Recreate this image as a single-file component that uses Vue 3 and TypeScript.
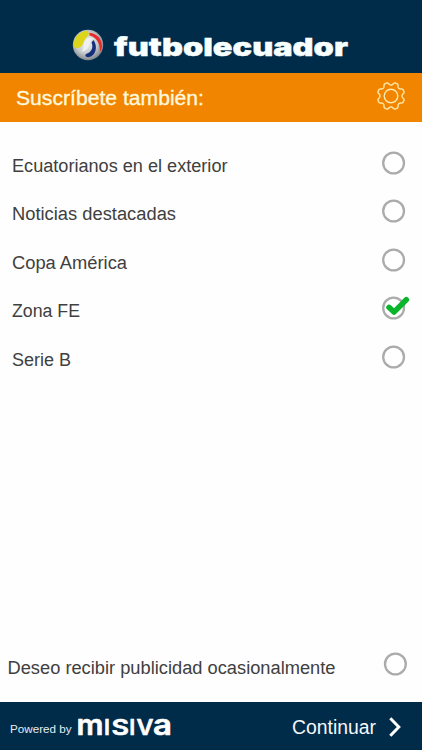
<script setup lang="ts">
import { ref } from 'vue'

interface Topic {
  label: string
  width: number
  selected: boolean
}

const topics = ref<Topic[]>([
  { label: 'Ecuatorianos en el exterior', width: 215.5, selected: false },
  { label: 'Noticias destacadas', width: 164, selected: false },
  { label: 'Copa América', width: 115, selected: false },
  { label: 'Zona FE', width: 68, selected: true },
  { label: 'Serie B', width: 59, selected: false },
])
const advertising = ref(false)

// Eight flat-topped teeth, with a gap between teeth at twelve o'clock.
function gearPath(cx: number, cy: number): string {
  const points: string[] = []
  for (let i = 0; i < 160; i++) {
    const a = (i / 160) * Math.PI * 2
    const wave = Math.tanh(1.5 * (0.15 - Math.cos(8 * a)))
    const r = 12.3 + 1.5 * wave
    points.push(`${(cx + r * Math.sin(a)).toFixed(2)} ${(cy - r * Math.cos(a)).toFixed(2)}`)
  }
  return `M${points.join('L')}Z`
}
const gear = gearPath(15, 15)
</script>

<template>
  <main class="screen">
    <header class="brand">
      <svg class="ball" width="32" height="32" viewBox="0 0 32 32" aria-hidden="true">
        <defs>
          <radialGradient id="sphere" cx="0.45" cy="0.42" r="0.6">
            <stop offset="0" stop-color="#f4f5f6" />
            <stop offset="0.6" stop-color="#c5c9cc" />
            <stop offset="1" stop-color="#7b8188" />
          </radialGradient>
        </defs>
        <circle cx="16" cy="16" r="15.2" fill="url(#sphere)" />
        <path d="M1.600 17.500C1.500 9 6.500 3 14.500 1.800c3 .8 3 4 .5 6.200-3.500 3-3 8-6.800 10.300-2.400 1.300-5 .7-6.600-.8z" fill="#ddd51c" />
        <path d="M17.500 3.800C25 4.500 30 10 30 17.500c-.3 2.300-1 4-2 5.500C28 14 24.500 8 17.500 6.500z" fill="#e62a2c" />
        <path d="M21.500 11c4.500 6.500 2.500 15-4 17-3.500.8-5.500-1.600-3-3.200C20 23 21.500 18 19.500 13.500z" fill="#14307d" />
        <path d="M12.500 14c1.500-5.500 6-7.500 10-3.500-3-1-4.500.5-5 4-.8 5-4 8-8 8 2.500-2.500 2-5.500 3-8.500z" fill="#eef0f2" />
      </svg>
      <svg class="brand-name" width="238" height="30" viewBox="0 0 238 30">
        <text x="2" y="22.500" textLength="234" lengthAdjust="spacingAndGlyphs">futbolecuador</text>
      </svg>
    </header>

    <div class="title-bar">
      <svg class="title" width="200" height="30" viewBox="0 0 200 30">
        <text x="0" y="21" textLength="188" lengthAdjust="spacingAndGlyphs">Suscríbete también:</text>
      </svg>
      <svg class="gear" width="30" height="30" viewBox="0 0 30 30" aria-hidden="true">
        <path :d="gear" />
        <circle cx="15" cy="15" r="6.800" />
      </svg>
    </div>

    <section class="topics">
      <div v-for="topic in topics" :key="topic.label" class="row" @click="topic.selected = !topic.selected">
        <svg class="label" width="340" height="28" viewBox="0 0 340 28">
          <text x="0" y="20" :textLength="topic.width" lengthAdjust="spacingAndGlyphs">{{ topic.label }}</text>
        </svg>
        <svg class="check" width="30" height="28" viewBox="0 0 30 28">
          <circle cx="12.600" cy="14" r="10.400" />
          <path v-if="topic.selected" d="M8 13.300l5 4.800L25.300 5.700" />
        </svg>
      </div>
    </section>

    <div class="row advertising" @click="advertising = !advertising">
      <svg class="label" width="340" height="28" viewBox="0 0 340 28">
        <text x="-0.500" y="19.500" textLength="328" lengthAdjust="spacingAndGlyphs">Deseo recibir publicidad ocasionalmente</text>
      </svg>
      <svg class="check" width="30" height="28" viewBox="0 0 30 28">
        <circle cx="12.400" cy="14" r="10.400" />
        <path v-if="advertising" d="M8 13.300l5 4.800L25.300 5.700" />
      </svg>
    </div>

    <footer class="footer">
      <svg class="powered" width="64" height="20" viewBox="0 0 64 20">
        <text x="0" y="14" textLength="61.500" lengthAdjust="spacingAndGlyphs">Powered by</text>
      </svg>
      <svg class="misiva" width="96" height="24" viewBox="0 0 96 24">
        <text class="low" x="-1.500" y="19.500" textLength="27" lengthAdjust="spacingAndGlyphs">m</text>
        <text class="cap" x="26" y="19.500">i</text>
        <text class="cap" x="33.500" y="19.500" textLength="17.500" lengthAdjust="spacingAndGlyphs">s</text>
        <text class="cap" x="51.300" y="19.500">i</text>
        <text class="cap" x="58.500" y="19.500" textLength="17" lengthAdjust="spacingAndGlyphs">v</text>
        <text class="low" x="75" y="19.500" textLength="19" lengthAdjust="spacingAndGlyphs">a</text>
      </svg>
      <button class="next" type="button">
        <svg width="88" height="28" viewBox="0 0 88 28">
          <text x="0" y="20" textLength="84" lengthAdjust="spacingAndGlyphs">Continuar</text>
        </svg>
        <svg class="chevron" width="14" height="22" viewBox="0 0 14 22" aria-hidden="true">
          <path d="M2.300 2.300l8.500 8.700-8.500 8.700" />
        </svg>
      </button>
    </footer>
  </main>
</template>

<style>
body {
  margin: 0;
}
</style>

<style scoped>
.screen {
  display: flex;
  flex-direction: column;
  width: 422px;
  height: 750px;
  overflow: hidden;
  background: #fefefe;
  font-family: "Liberation Sans", Arial, sans-serif;
}
svg {
  display: block;
  flex: none;
  overflow: visible;
}
.brand {
  display: flex;
  box-sizing: border-box;
  height: 73px;
  padding: 29px 0 0 72px;
  gap: 8px;
  background: #002b49;
}
.brand-name {
  margin-top: 4px;
}
.brand-name text {
  font: 900 25px Inter, sans-serif;
  fill: #f8ffff;
  stroke: #f8ffff;
  stroke-width: 0.4;
}
.title-bar {
  display: flex;
  box-sizing: border-box;
  height: 49px;
  padding: 8px 16px 0;
  justify-content: space-between;
  background: #f18500;
}
.title {
  margin-top: 3px;
}
.title text {
  font-size: 20px;
  fill: #fff8dd;
  stroke: #fff8dd;
  stroke-width: 0.35;
}
.gear path,
.gear circle {
  fill: none;
  stroke: #ffe8a8;
  stroke-width: 1.400;
}
.topics {
  display: flex;
  flex-direction: column;
  gap: 20.500px;
  padding: 25.700px 11px 0 12px;
}
.row {
  display: flex;
  height: 28px;
  justify-content: space-between;
}
.topics .check {
  margin-top: 1px;
}
.label {
  margin-top: 4px;
}
.label text {
  font-size: 18px;
  fill: #404040;
}
.check circle {
  fill: #fff;
  stroke: #ababab;
  stroke-width: 2.300;
}
.check path {
  fill: none;
  stroke: #08b52b;
  stroke-width: 5.500;
  stroke-linecap: round;
  stroke-linejoin: round;
}
.advertising {
  margin-top: auto;
  padding: 0 9px 24px 8px;
}
.footer {
  display: flex;
  box-sizing: border-box;
  height: 48px;
  padding: 0 20px 0 10px;
  background: #002b49;
}
.powered {
  margin-top: 17px;
}
.powered text {
  font-size: 11.500px;
  fill: #e5eef3;
}
.misiva {
  margin: 12.500px 0 0 4px;
}
.misiva text {
  font-family: Inter, sans-serif;
  font-weight: 600;
  fill: #fff;
  stroke: #fff;
  stroke-width: 0.6;
  stroke-linejoin: round;
}
.misiva .low {
  font-size: 28.500px;
}
.misiva .cap {
  font-size: 21.500px;
  text-transform: uppercase;
}
.next {
  display: flex;
  gap: 8px;
  margin: 12px 0 0 auto;
  padding: 0;
  border: 0;
  background: none;
  font-family: inherit;
  height: 28px;
}
.next text {
  font-size: 20px;
  fill: #f4f9fb;
}
.chevron {
  margin-top: 2px;
}
.chevron path {
  fill: none;
  stroke: #fff;
  stroke-width: 3;
}
</style>
